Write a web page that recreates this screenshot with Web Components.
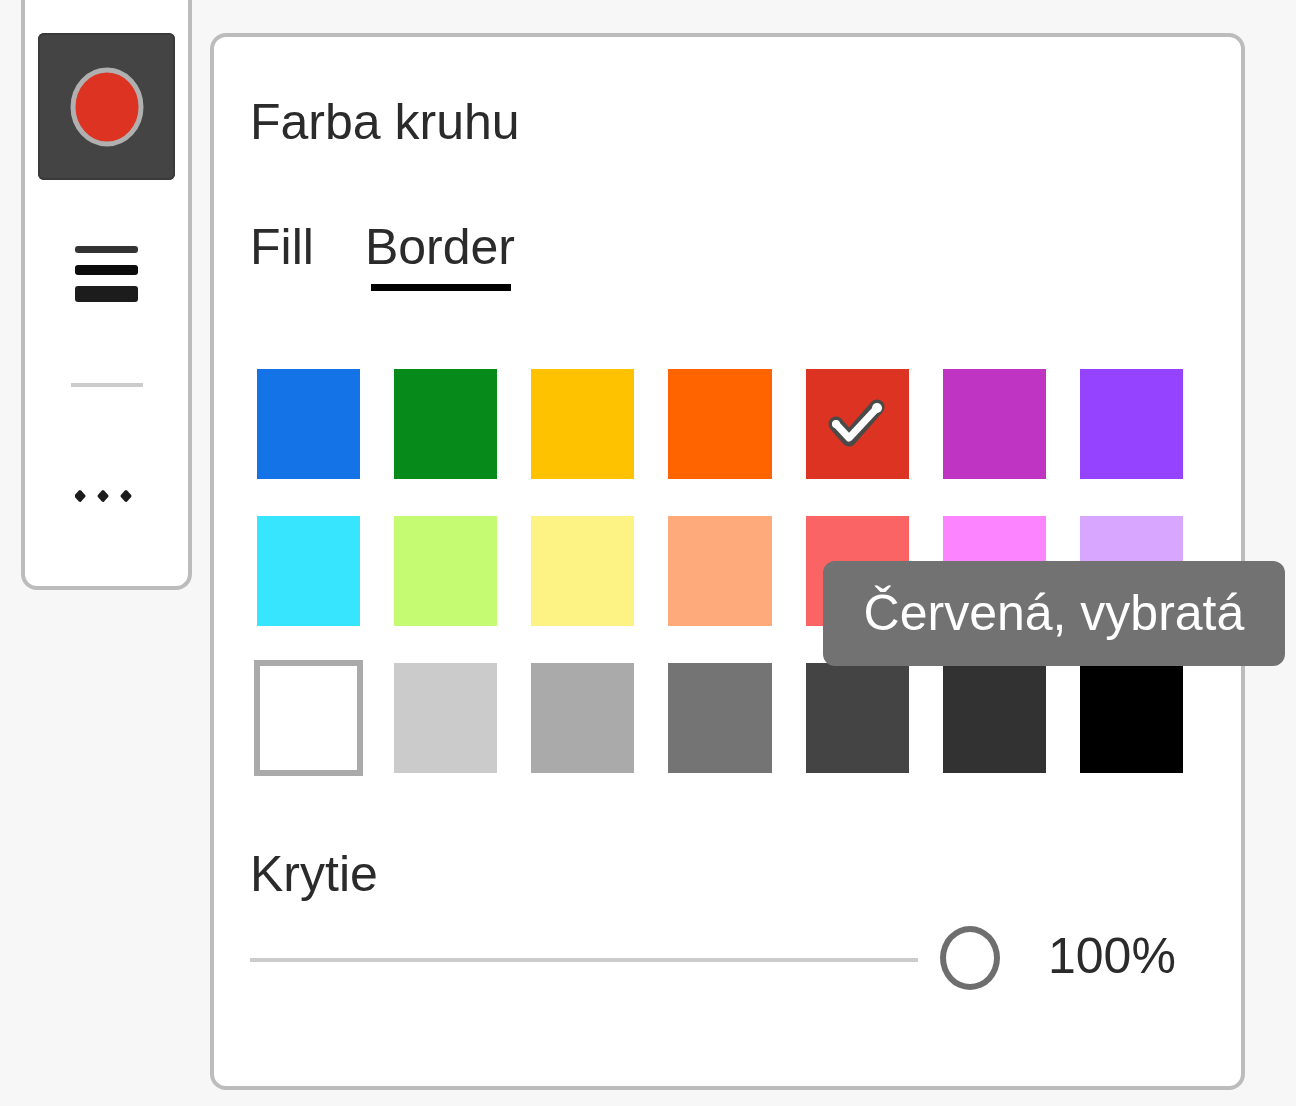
<!DOCTYPE html>
<html lang="sk">
<head>
<meta charset="utf-8">
<title>Farba kruhu</title>
<style>
    body {
        margin: 0;
        min-height: 100vh;
        background: #f7f7f7;
        color: #2b2b2b;
        font: 50px/60px "Liberation Sans", Arial, sans-serif;
    }
</style>
</head>
<body>
<color-editor></color-editor>

<script>
const COLORS = [
    ['Modrá', '#1473e6'], ['Zelená', '#068a1a'], ['Žltá', '#ffc200'], ['Oranžová', '#ff6400'],
    ['Červená', '#dc3323'], ['Purpurová', '#bf34c2'], ['Fialová', '#9543ff'],
    ['Azúrová', '#38e5ff'], ['Svetlozelená', '#c5fb72'], ['Svetložltá', '#fdf385'], ['Svetlooranžová', '#ffaa7b'],
    ['Svetločervená', '#fb6464'], ['Ružová', '#fc85ff'], ['Svetlofialová', '#d9a6ff'],
    ['Biela', '#ffffff'], ['Sivá 1', '#cbcbcb'], ['Sivá 2', '#aaaaaa'], ['Sivá 3', '#747474'],
    ['Sivá 4', '#444444'], ['Sivá 5', '#323232'], ['Čierna', '#000000']
];

class ToolButton extends HTMLElement {
    connectedCallback() {
        this.attachShadow({ mode: 'open' }).innerHTML = `
            <style>
                :host {
                    display: block;
                }

                button {
                    display: flex;
                    align-items: center;
                    justify-content: center;
                    width: 100%;
                    height: 147px;
                    padding: 0;
                    border: 0;
                    border-radius: 6px;
                    background: none;
                }

                :host([active]) button {
                    background: #444444;
                    box-shadow: inset 0 0 0 2px #3a3a3a;
                }

                :host([small]) button {
                    height: 80px;
                }
            </style>
            <button type="button" aria-label="${this.getAttribute('label')}"><slot></slot></button>
        `;
    }
}

class ToolBar extends HTMLElement {
    connectedCallback() {
        this.attachShadow({ mode: 'open' }).innerHTML = `
            <style>
                :host {
                    display: block;
                    box-sizing: border-box;
                    width: 171px;
                    padding: 33px 13px 50px;
                    border: 4px solid #bcbcbc;
                    border-top: 0;
                    border-radius: 0 0 16px 16px;
                    background: #ffffff;
                }

                svg {
                    display: block;
                }

                .stroke {
                    margin: 20px 0 36px;
                }

                hr {
                    width: 72px;
                    height: 4px;
                    margin: 0 auto 69px;
                    border: 0;
                    background: #cccccc;
                }
            </style>
            <tool-button active label="Farba">
                <svg width="76" height="80" viewBox="0 0 76 80">
                    <ellipse cx="38" cy="40" rx="34" ry="37" fill="#dc3323" stroke="#b0b0b0" stroke-width="5"/>
                </svg>
            </tool-button>
            <tool-button class="stroke" label="Hrúbka čiary">
                <svg width="64" height="58" viewBox="0 0 64 58" fill="#1c1c1c">
                    <rect x="0" y="1" width="63" height="7" rx="3" fill="#333333"/>
                    <rect x="0" y="20" width="63" height="10" rx="3" fill="#0c0c0c"/>
                    <rect x="0" y="41" width="63" height="16" rx="3"/>
                </svg>
            </tool-button>
            <hr>
            <tool-button small label="Viac">
                <svg width="64" height="14" viewBox="0 0 64 14" fill="#1c1c1c" stroke="#1c1c1c" stroke-width="3" stroke-linejoin="round">
                    <path d="M5 2.500L9 7L5 11.500L1 7Z"/>
                    <path d="M28 2.500L32 7L28 11.500L24 7Z"/>
                    <path d="M51 2.500L55 7L51 11.500L47 7Z"/>
                </svg>
            </tool-button>
        `;
    }
}

class TipLabel extends HTMLElement {
    connectedCallback() {
        this.attachShadow({ mode: 'open' }).innerHTML = `
            <style>
                :host {
                    display: block;
                    padding: 22px 41px 23px;
                    border-radius: 12px;
                    background: #727272;
                    color: #ffffff;
                    white-space: nowrap;
                }
            </style>
            <slot></slot>
        `;
    }
}

class ColorSwatch extends HTMLElement {
    connectedCallback() {
        const name = this.getAttribute('name');
        const selected = this.hasAttribute('selected');
        this.attachShadow({ mode: 'open' }).innerHTML = `
            <style>
                :host {
                    display: block;
                    position: relative;
                }

                button {
                    display: flex;
                    align-items: center;
                    justify-content: center;
                    width: 100%;
                    height: 110px;
                    padding: 0;
                    border: 0;
                    background: ${this.getAttribute('color')};
                }

                :host([outlined]) button {
                    box-shadow: 0 0 0 3px #aaaaaa, inset 0 0 0 3px #aaaaaa;
                }

                /* the tip hangs over the rows below */
                tip-label {
                    position: absolute;
                    top: 192px;
                    left: 17px;
                    z-index: 1;
                }
            </style>
            <button type="button" aria-label="${name}" aria-pressed="${selected}">
                ${selected ? `
                <svg width="60" height="54" viewBox="0 0 60 54" fill="none" stroke-linecap="round" stroke-linejoin="round">
                    <path d="M9 27L22 42L50 10" stroke="#4a4a48" stroke-width="15"/>
                    <path d="M9 27L22 41L50 11" stroke="#ffffff" stroke-width="7"/>
                    <circle cx="9" cy="27" r="4" fill="#ffffff"/>
                    <circle cx="50" cy="11" r="5" fill="#ffffff"/>
                </svg>` : ''}
            </button>
            ${selected ? `<tip-label role="tooltip">${name}, vybratá</tip-label>` : ''}
        `;
    }
}

class ColorTabs extends HTMLElement {
    connectedCallback() {
        this.attachShadow({ mode: 'open' }).innerHTML = `
            <style>
                :host {
                    display: flex;
                    gap: 51px;
                }

                button {
                    position: relative;
                    padding: 0 0 14px;
                    border: 0;
                    background: none;
                    color: inherit;
                    font: inherit;
                }

                [aria-selected="true"]::after {
                    content: "";
                    position: absolute;
                    right: 4px;
                    bottom: 0;
                    left: 6px;
                    height: 7px;
                    background: #000000;
                }
            </style>
            <button type="button" role="tab" aria-selected="false">Fill</button>
            <button type="button" role="tab" aria-selected="true">Border</button>
        `;
    }
}

class OpacitySlider extends HTMLElement {
    connectedCallback() {
        this.attachShadow({ mode: 'open' }).innerHTML = `
            <style>
                :host {
                    display: block;
                }

                label {
                    display: block;
                    margin-bottom: 22px;
                }

                .row {
                    display: flex;
                    gap: 48px;
                }

                input {
                    -webkit-appearance: none;
                    appearance: none;
                    flex: 1;
                    min-width: 0;
                    height: 64px;
                    margin: 0;
                    background: linear-gradient(#cccccc, #cccccc) no-repeat left 32px / calc(100% - 82px) 4px;
                }

                input::-webkit-slider-thumb {
                    -webkit-appearance: none;
                    box-sizing: border-box;
                    width: 60px;
                    height: 64px;
                    border: 6px solid #6e6e6e;
                    border-radius: 50%;
                    background: #ffffff;
                }

                output {
                    min-width: 135px;
                }
            </style>
            <label for="opacity">Krytie</label>
            <div class="row">
                <input id="opacity" type="range" min="0" max="100" value="100">
                <output for="opacity">100%</output>
            </div>
        `;
        const input = this.shadowRoot.querySelector('input');
        input.addEventListener('input', () => {
            this.shadowRoot.querySelector('output').textContent = `${input.value}%`;
        });
    }
}

class ColorPanel extends HTMLElement {
    connectedCallback() {
        this.attachShadow({ mode: 'open' }).innerHTML = `
            <style>
                :host {
                    display: block;
                    box-sizing: border-box;
                    padding: 55px 58px 96px 36px;
                    border: 4px solid #bcbcbc;
                    border-radius: 16px;
                    background: #ffffff;
                }

                h2 {
                    margin: 0 0 65px;
                    font: inherit;
                }

                .grid {
                    display: grid;
                    grid-template-columns: repeat(7, 1fr);
                    gap: 37px 34px;
                    margin: 78px 0 71px 7px;
                }
            </style>
            <h2>Farba kruhu</h2>
            <color-tabs role="tablist"></color-tabs>
            <div class="grid">
                ${COLORS.map(([name, color]) => `
                    <color-swatch name="${name}" color="${color}"
                        ${name === 'Červená' ? 'selected' : ''} ${name === 'Biela' ? 'outlined' : ''}></color-swatch>
                `).join('')}
            </div>
            <opacity-slider></opacity-slider>
        `;
    }
}

class ColorEditor extends HTMLElement {
    connectedCallback() {
        this.attachShadow({ mode: 'open' }).innerHTML = `
            <style>
                :host {
                    display: flex;
                    align-items: flex-start;
                    gap: 18px;
                    padding: 0 51px 15px 21px;
                }

                tool-bar {
                    flex: none;
                }

                color-panel {
                    flex: 1;
                    margin-top: 33px;
                }
            </style>
            <tool-bar></tool-bar>
            <color-panel></color-panel>
        `;
    }
}

customElements.define('tool-button', ToolButton);
customElements.define('tool-bar', ToolBar);
customElements.define('tip-label', TipLabel);
customElements.define('color-swatch', ColorSwatch);
customElements.define('color-tabs', ColorTabs);
customElements.define('opacity-slider', OpacitySlider);
customElements.define('color-panel', ColorPanel);
customElements.define('color-editor', ColorEditor);
</script>
</body>
</html>
